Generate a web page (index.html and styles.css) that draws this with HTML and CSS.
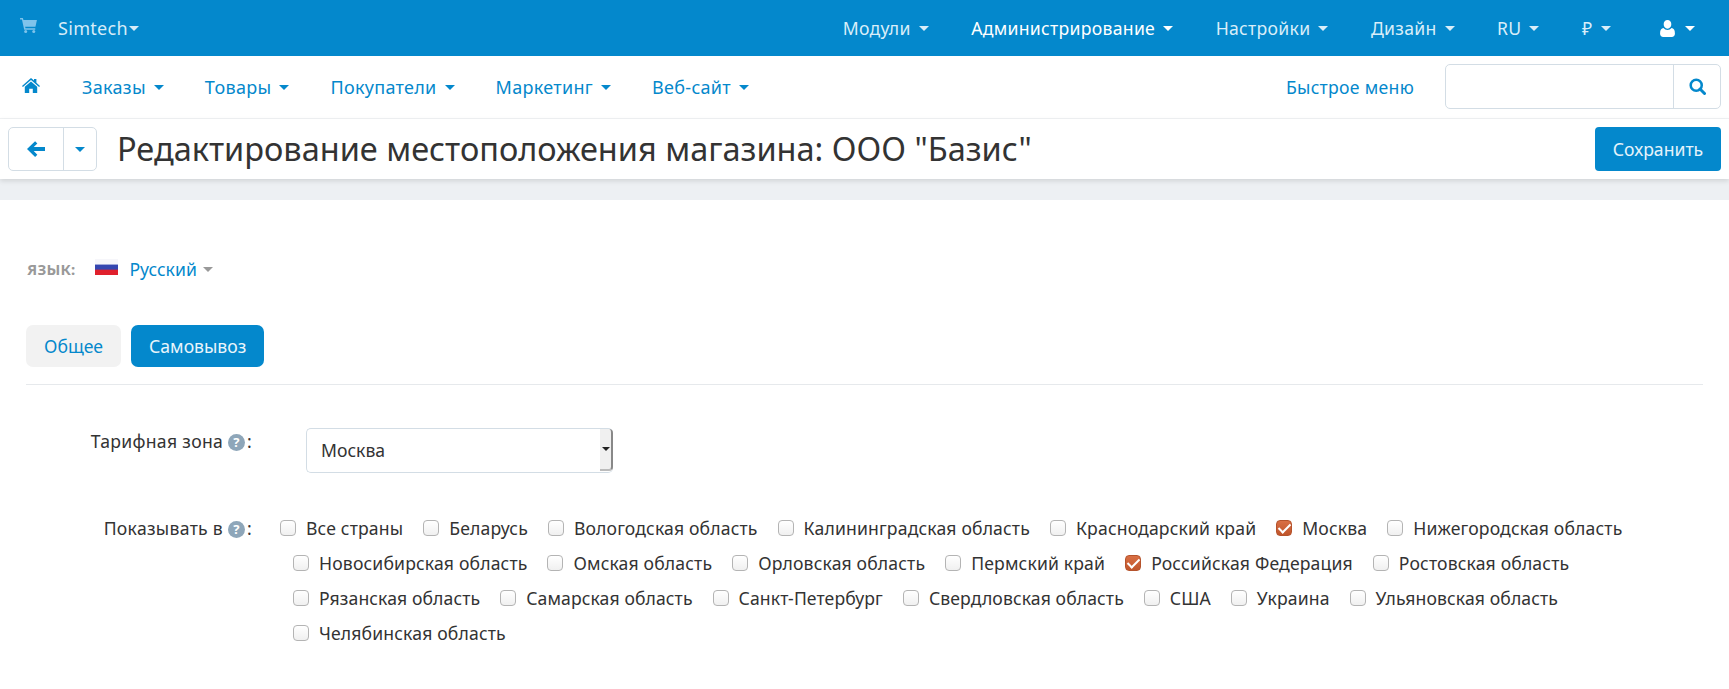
FILE: index.html
```html
<!DOCTYPE html>
<html lang="ru">
<head>
    <meta charset="UTF-8">
    <title>Редактирование местоположения магазина</title>
    <link rel="stylesheet" href="styles.css">
</head>
<body>
    <!-- Верхняя панель -->
    <header class="topbar">
        <div class="topbar-left">
            <svg class="cart-icon" viewBox="0 0 18 16"><path d="M0 0h3l.6 2H18l-1.600 7.200H5.400l.4 1.600h10.400v1.600H4.400L2 1.600H0z"/><circle cx="6" cy="14.400" r="1.600"/><circle cx="14.600" cy="14.400" r="1.600"/></svg>
            <span class="brand">Simtech</span><i class="caret caret-tight"></i>
        </div>
        <nav class="topbar-right">
            <a class="top-link">Модули<i class="caret"></i></a>
            <a class="top-link top-active">Администрирование<i class="caret"></i></a>
            <a class="top-link">Настройки<i class="caret"></i></a>
            <a class="top-link">Дизайн<i class="caret"></i></a>
            <a class="top-link">RU<i class="caret"></i></a>
            <a class="top-link">₽<i class="caret"></i></a>
            <a class="top-link top-user">
                <svg class="user-icon" viewBox="0 0 14 16"><path d="M7 0c2.200 0 3.600 1.800 3.600 4S9.200 8.200 7 8.200 3.400 6.200 3.400 4 4.800 0 7 0zM3.200 7.600C4.200 8.800 5.500 9.400 7 9.400s2.800-.6 3.800-1.800c2 .2 3.200 1.800 3.200 5 0 2-1.200 3.400-3 3.400H3c-1.800 0-3-1.400-3-3.400 0-3.200 1.200-4.800 3.200-5z"/></svg><i class="caret"></i>
            </a>
        </nav>
    </header>

    <!-- Меню -->
    <div class="mainnav">
        <nav class="mainnav-left">
            <svg class="home-icon" viewBox="0 0 18 15"><path d="M9 0l3 2.600V1h2.400v3.700L18 7.900l-.9 1L9 1.900.9 8.900 0 7.900z"/><path d="M9 3.400l6.200 5.300V15h-4.400v-4.300H7.200V15H2.800V8.700z"/></svg>
            <a class="nav-link">Заказы<i class="caret"></i></a>
            <a class="nav-link">Товары<i class="caret"></i></a>
            <a class="nav-link">Покупатели<i class="caret"></i></a>
            <a class="nav-link">Маркетинг<i class="caret"></i></a>
            <a class="nav-link">Веб-сайт<i class="caret"></i></a>
        </nav>
        <div class="mainnav-right">
            <a class="quick-menu">Быстрое меню</a>
            <div class="search">
                <input class="search-input" type="text">
                <button class="search-btn">
                    <svg viewBox="0 0 16 16"><circle cx="6.800" cy="6.800" r="5.200" fill="none" stroke="currentColor" stroke-width="2.400"/><path d="M10.400 10.400l4.200 4.200" stroke="currentColor" stroke-width="2.800" stroke-linecap="round"/></svg>
                </button>
            </div>
        </div>
    </div>

    <!-- Заголовок страницы -->
    <div class="titlebar">
        <div class="back-group">
            <button class="back-btn">
                <svg viewBox="0 0 16 14"><path d="M7.200 0l2 2-3.200 3.200H16v3.600H6L9.200 12l-2 2L0 7z"/></svg>
            </button>
            <button class="back-more"><i class="caret"></i></button>
        </div>
        <h1 class="page-title">Редактирование местоположения магазина: ООО "Базис"</h1>
        <button class="save-btn">Сохранить</button>
    </div>

    <div class="gap-strip"></div>

    <main class="content">
        <div class="lang-row">
            <span class="lang-label">ЯЗЫК:</span>
            <span class="flag"></span>
            <a class="lang-link">Русский</a><i class="caret caret-gray"></i>
        </div>

        <div class="tabs">
            <a class="tab">Общее</a>
            <a class="tab tab-active">Самовывоз</a>
        </div>

        <div class="form-row zone-row">
            <label class="form-label">Тарифная зона <i class="help">?</i>:</label>
            <div class="fake-select">
                <span>Москва</span>
                <span class="select-arrow"><i class="select-caret"></i></span>
            </div>
        </div>

        <div class="form-row show-row">
            <label class="form-label">Показывать в <i class="help">?</i>:</label>
            <div class="check-rows">
                <div class="check-line check-line-first">
                    <label class="check"><i class="box"></i>Все страны</label>
                    <label class="check"><i class="box"></i>Беларусь</label>
                    <label class="check"><i class="box"></i>Вологодская область</label>
                    <label class="check"><i class="box"></i>Калининградская область</label>
                    <label class="check"><i class="box"></i>Краснодарский край</label>
                    <label class="check"><i class="box box-on"></i>Москва</label>
                    <label class="check"><i class="box"></i>Нижегородская область</label>
                </div>
                <div class="check-line">
                    <label class="check"><i class="box"></i>Новосибирская область</label>
                    <label class="check"><i class="box"></i>Омская область</label>
                    <label class="check"><i class="box"></i>Орловская область</label>
                    <label class="check"><i class="box"></i>Пермский край</label>
                    <label class="check"><i class="box box-on"></i>Российская Федерация</label>
                    <label class="check"><i class="box"></i>Ростовская область</label>
                </div>
                <div class="check-line check-line-dense">
                    <label class="check"><i class="box"></i>Рязанская область</label>
                    <label class="check"><i class="box"></i>Самарская область</label>
                    <label class="check"><i class="box"></i>Санкт-Петербург</label>
                    <label class="check"><i class="box"></i>Свердловская область</label>
                    <label class="check"><i class="box"></i>США</label>
                    <label class="check"><i class="box"></i>Украина</label>
                    <label class="check"><i class="box"></i>Ульяновская область</label>
                </div>
                <div class="check-line">
                    <label class="check"><i class="box"></i>Челябинская область</label>
                </div>
            </div>
        </div>
    </main>
</body>
</html>
```

FILE: styles.css
```css
* {
    box-sizing: border-box;
}
body {
    margin: 0;
    height: 689px;
    overflow: hidden;
    background-color: #fff;
    font-family: 'Noto Sans', sans-serif;
    font-size: 17.6px;
    color: #333;
}
i {
    font-style: normal;
}
.caret {
    display: inline-block;
    width: 0;
    height: 0;
    margin-left: 8px;
    vertical-align: middle;
    border-top: 5px solid currentColor;
    border-left: 5px solid transparent;
    border-right: 5px solid transparent;
}
.caret-tight {
    margin-left: 1px;
}
.caret-gray {
    color: #999;
    margin-left: 6px;
}

/* верхняя панель */
.topbar {
    height: 56px;
    background-color: #0488cc;
    color: #fff;
    display: flex;
    justify-content: space-between;
    align-items: center;
    padding: 0 34px 0 20px;
    letter-spacing: 0.3px;
}
.topbar-left {
    display: flex;
    align-items: center;
    color: #d6ecf8;
    font-size: 18px;
}
.cart-icon {
    width: 17px;
    height: 15px;
    fill: #7fc3eb;
    margin-right: 21px;
    margin-top: -5px;
}
.topbar-right {
    display: flex;
    align-items: center;
    gap: 42.5px;
}
.top-link {
    color: #d9eef9;
    display: flex;
    align-items: center;
}
.top-active {
    color: #fff;
}
.top-user {
    margin-left: 7px;
    color: #fff;
}
.top-user .caret {
    margin-left: 10px;
}
.user-icon {
    width: 15px;
    height: 17px;
    fill: #fff;
}

/* меню */
.mainnav {
    height: 63px;
    display: flex;
    justify-content: space-between;
    align-items: center;
    padding: 0 8px 0 22px;
    border-bottom: 1px solid #f1f3f5;
}
.mainnav-left {
    display: flex;
    align-items: center;
    gap: 41px;
}
.home-icon {
    width: 18px;
    height: 15px;
    fill: #0488cc;
    margin-top: -3px;
    margin-right: 1px;
}
.nav-link {
    color: #0488cc;
    display: flex;
    align-items: center;
    font-size: 18px;
    letter-spacing: 0.3px;
}
.mainnav-right {
    display: flex;
    align-items: center;
    gap: 31px;
}
.quick-menu {
    color: #0488cc;
    letter-spacing: 0.3px;
}
.search {
    width: 276px;
    height: 45px;
    margin-top: -2px;
    display: flex;
    border: 1px solid #d3dde5;
    border-radius: 5px;
}
.search-input {
    flex: 1;
    min-width: 0;
    border: none;
    border-right: 1px solid #d3dde5;
    background: none;
}
.search-btn {
    width: 46px;
    border: none;
    background: none;
    padding: 0;
    color: #0488cc;
    display: flex;
    align-items: center;
    justify-content: center;
}
.search-btn svg {
    width: 17px;
    height: 17px;
}

/* заголовок */
.titlebar {
    height: 60px;
    display: flex;
    align-items: center;
    padding: 0 8px 0 8px;
    background-color: #fff;
    box-shadow: 0 2px 5px rgba(0, 0, 0, 0.12);
    position: relative;
}
.back-group {
    display: flex;
    width: 89px;
    height: 44px;
    border: 1px solid #d3dde5;
    border-radius: 5px;
    margin-right: 20px;
}
.back-btn, .back-more {
    border: none;
    background: none;
    padding: 0;
    color: #0488cc;
    display: flex;
    align-items: center;
    justify-content: center;
}
.back-btn {
    width: 55px;
    border-right: 1px solid #d3dde5;
}
.back-btn svg {
    width: 18px;
    height: 16px;
    fill: currentColor;
}
.back-more {
    flex: 1;
}
.back-more .caret {
    margin-left: 0;
}
.page-title {
    flex: 1;
    margin: -2px 0 0;
    font-size: 32.5px;
    font-weight: 400;
    color: #333;
}
.save-btn {
    width: 126px;
    height: 44px;
    border: none;
    border-radius: 4px;
    background-color: #0488cc;
    color: #e4f3fb;
    font-family: inherit;
    font-size: 17.6px;
}
.gap-strip {
    height: 21px;
    background-color: #edf0f3;
}

/* контент */
.content {
    padding: 0 26px;
}
.lang-row {
    margin-top: 57px;
    height: 24px;
    display: flex;
    align-items: center;
}
.lang-label {
    padding-left: 1px;
    font-size: 15px;
    font-weight: 700;
    letter-spacing: 0.2px;
    color: #999;
    margin-right: 20px;
}
.flag {
    width: 23px;
    height: 16px;
    margin-right: 11px;
    margin-top: -5px;
    background: linear-gradient(#f6f6fa 0 30%, #3446b0 40% 62%, #e0202c 72%);
}
.lang-link {
    color: #0488cc;
}
.tabs {
    margin-top: 44px;
    padding-bottom: 17px;
    display: flex;
    gap: 10px;
    border-bottom: 1px solid #e6e9ec;
}
.tab {
    height: 42px;
    padding: 0 18px;
    display: flex;
    align-items: center;
    border-radius: 7px;
    background-color: #f2f2f2;
    color: #0488cc;
}
.tab-active {
    background-color: #0488cc;
    color: #e9f5fb;
}
.form-row {
    display: flex;
}
.form-label {
    width: 226px;
    flex-shrink: 0;
    text-align: right;
    letter-spacing: 0.3px;
}
.help {
    display: inline-block;
    width: 17px;
    height: 17px;
    margin-right: 2px;
    border-radius: 50%;
    background-color: #8ea6b9;
    color: #fff;
    font-size: 13px;
    font-weight: 700;
    line-height: 17px;
    text-align: center;
    vertical-align: 1px;
}
.zone-row {
    margin-top: 43px;
}
.zone-row .form-label {
    padding-top: 1px;
}
.fake-select {
    margin-left: 54px;
    width: 307px;
    height: 45px;
    display: flex;
    justify-content: space-between;
    align-items: center;
    padding: 0 0 1px 14px;
    border: 1px solid #d3dde5;
    border-right: none;
    border-radius: 5px;
}
.select-arrow {
    width: 13px;
    height: 100%;
    display: flex;
    align-items: center;
    justify-content: center;
    background-color: #f0f0f0;
    border-right: 2px solid #888;
    border-bottom: 2px solid #bbb;
    border-radius: 0 4px 4px 0;
}
.select-caret {
    width: 0;
    height: 0;
    border-top: 4px solid #222;
    border-left: 4px solid transparent;
    border-right: 4px solid transparent;
}
.show-row {
    margin-top: 43px;
}
.show-row .form-label {
    line-height: 24px;
}
.check-rows {
    padding-left: 41px;
    display: flex;
    flex-direction: column;
    gap: 11px;
    letter-spacing: 0.15px;
}
.check-line {
    display: flex;
    gap: 20px;
    height: 24px;
    align-items: center;
}
.check-line-first {
    margin-left: -13px;
}
.check-line-dense {
    letter-spacing: 0.1px;
}
.check {
    display: flex;
    align-items: center;
    white-space: nowrap;
}
.box {
    width: 16px;
    height: 16px;
    margin-right: 10px;
    border: 1px solid #b4b4b4;
    border-radius: 4px;
    background: linear-gradient(#fff, #f0f0f0);
}
.box-on {
    border-color: #b5532c;
    background: linear-gradient(#d96f44, #c0552b);
    position: relative;
}
.box-on::after {
    content: "";
    position: absolute;
    left: 4px;
    top: 0;
    width: 5px;
    height: 10px;
    border: solid #fff;
    border-width: 0 2.5px 2.5px 0;
    transform: rotate(45deg);
}
```
